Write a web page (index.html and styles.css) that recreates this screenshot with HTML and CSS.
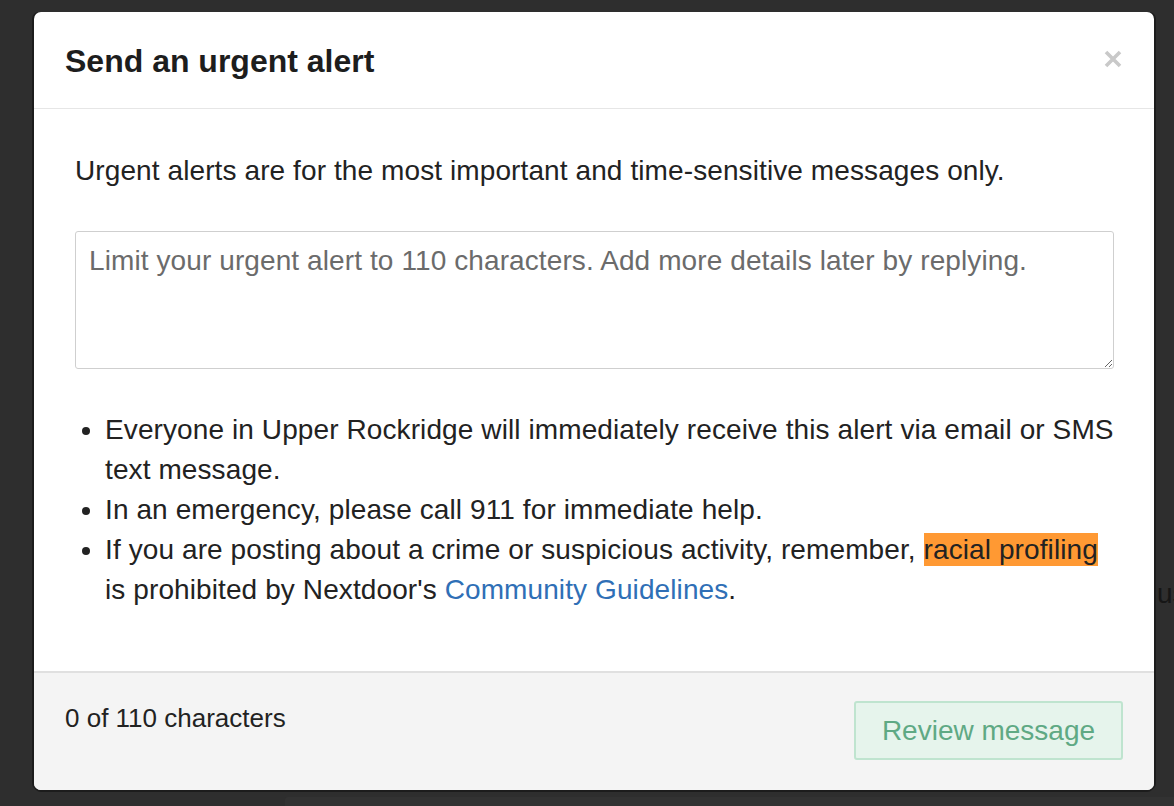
FILE: index.html
```html
<!DOCTYPE html>
<html lang="en">
<head>
<meta charset="utf-8">
<title>Send an urgent alert</title>
<link rel="stylesheet" href="styles.css">
</head>
<body>
<div class="backdrop">
  <span class="behind-text">us</span>
  <div class="behind-box"></div>
  <div class="modal">
    <div class="modal-header">
      <h1 class="modal-title">Send an urgent alert</h1>
      <button class="close-btn" aria-label="Close">
        <svg width="18" height="18" viewBox="0 0 18 18"><path d="M2 2 L16 16 M16 2 L2 16" stroke="#c9c9c9" stroke-width="3.6" stroke-linecap="butt"/></svg>
      </button>
    </div>
    <div class="modal-body">
      <p class="intro">Urgent alerts are for the most important and time-sensitive messages only.</p>
      <textarea class="alert-input" placeholder="Limit your urgent alert to 110 characters. Add more details later by replying."></textarea>
      <ul class="notes">
        <li>Everyone in Upper Rockridge will immediately receive this alert via email or SMS text message.</li>
        <li>In an emergency, please call 911 for immediate help.</li>
        <li>If you are posting about a crime or suspicious activity, remember, <span class="highlight">racial profiling</span> is prohibited by Nextdoor's <a class="link" href="#">Community Guidelines</a>.</li>
      </ul>
    </div>
    <div class="modal-footer">
      <span class="count">0 of 110 characters</span>
      <button class="review-btn">Review message</button>
    </div>
  </div>
</div>
</body>
</html>
```

FILE: styles.css
```css
html, body {
  margin: 0;
  padding: 0;
  height: 100%;
}
body {
  background: #2e2e2e;
  font-family: "Liberation Sans", Arial, sans-serif;
  overflow: hidden;
}
.backdrop {
  position: relative;
  width: 1174px;
  height: 806px;
  padding-top: 12px;
  box-sizing: border-box;
}
.behind-text {
  position: absolute;
  left: 1157px;
  top: 578px;
  font-size: 28px;
  color: #161616;
}
.behind-box {
  position: absolute;
  left: 285px;
  top: 797px;
  width: 900px;
  height: 20px;
  background: #323232;
  border-radius: 3px;
}
.modal {
  position: relative;
  margin-left: 34px;
  width: 1120px;
  height: 778px;
  background: #fff;
  border-radius: 7px;
  box-shadow: -2px 0 0 #1c1c1c, 0 2px 0 #1c1c1c, 2px 0 0 #1c1c1c;
  display: flex;
  flex-direction: column;
  overflow: hidden;
}
.modal-header {
  height: 96px;
  border-bottom: 1px solid #e6e6e6;
  display: flex;
  align-items: center;
  justify-content: space-between;
  padding: 0 32px 0 31px;
  flex: none;
}
.modal-title {
  margin: 0;
  font-size: 32px;
  font-weight: bold;
  color: #1d1d1d;
  line-height: 40px;
  margin-top: 2px;
}
.close-btn {
  border: 0;
  background: none;
  padding: 0;
  width: 18px;
  height: 18px;
  margin-top: -2px;
  display: flex;
}
.modal-body {
  flex: 1;
  padding: 42px 40px 0 41px;
  color: #222;
  font-size: 28px;
  line-height: 40px;
  letter-spacing: 0.1px;
}
.intro {
  margin: 0 0 40px 0;
}
.alert-input {
  display: block;
  width: 100%;
  height: 138px;
  box-sizing: border-box;
  border: 1px solid #cfcfcf;
  border-radius: 3px;
  padding: 9px 13px;
  font-family: "Liberation Sans", Arial, sans-serif;
  font-size: 28px;
  line-height: 40px;
  letter-spacing: 0.1px;
  color: #222;
  resize: vertical;
  outline: none;
}
.alert-input::placeholder {
  color: #6b6b6b;
}
.notes {
  margin: 41px 0 0 0;
  padding-left: 30px;
}
.highlight {
  background: #ff9933;
  padding: 1px 0 1px;
}
.link {
  color: #2f6fb6;
  text-decoration: none;
}
.modal-footer {
  height: 119px;
  flex: none;
  background: #f4f4f4;
  border-top: 2px solid #e0e0e0;
  box-sizing: border-box;
  display: flex;
  justify-content: space-between;
  align-items: flex-start;
  padding: 0 31px 0 31px;
}
.count {
  margin-top: 25px;
  line-height: 40px;
  font-size: 26px;
  color: #222;
}
.review-btn {
  margin-top: 28px;
  width: 269px;
  height: 59px;
  background: #e6f4ec;
  border: 2px solid #bfe4cf;
  border-radius: 3px;
  color: #5fa984;
  font-family: "Liberation Sans", Arial, sans-serif;
  font-size: 28px;
  padding: 0;
}
```
